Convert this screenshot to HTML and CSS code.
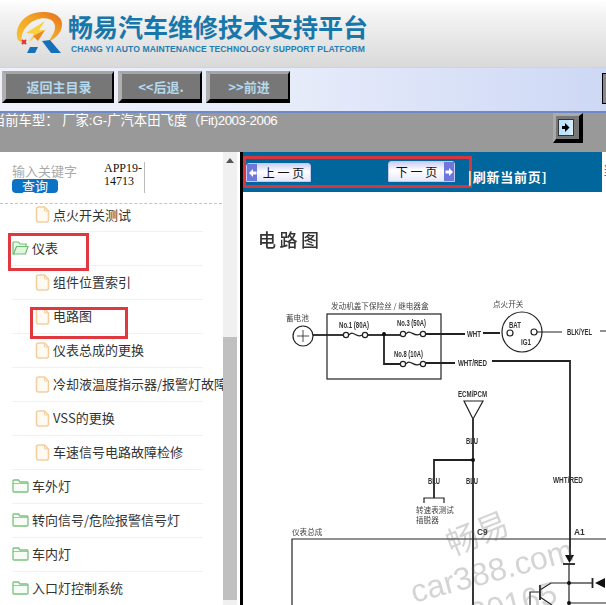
FILE: index.html
```html
<!DOCTYPE html>
<html lang="en">
<head>
<meta charset="UTF-8">
<title>畅易汽车维修技术支持平台</title>
<link rel="stylesheet" href="styles.css">
</head>
<body>

<svg class="defs" width="0" height="0">
  <symbol id="ico-file" viewBox="0 0 15 17">
    <path d="M1.5 3 Q1.5 1 3.5 1 H9.5 L13.5 5 V14 Q13.5 16 11.5 16 H3.5 Q1.5 16 1.5 14 Z" fill="#fffaf2" stroke="#f3cfa0" stroke-width="1.6"/>
    <path d="M9.5 1 V5 H13.5" fill="none" stroke="#f3cfa0" stroke-width="1"/>
  </symbol>
  <symbol id="ico-folder" viewBox="0 0 17 14">
    <path d="M1 2 Q1 1 2 1 H6.5 L8 3 H15 Q16 3 16 4 V12 Q16 13 15 13 H2 Q1 13 1 12 Z" fill="#f7fcf6" stroke="#79c47c" stroke-width="1.3"/>
    <path d="M1 4.5 H16" stroke="#79c47c" stroke-width=".8"/>
  </symbol>
  <symbol id="ico-open" viewBox="0 0 17 14">
    <path d="M1 2 Q1 1 2 1 H6.5 L8 3 H14 V5.5 H5 L2 13 H1 Z" fill="#eef8ec" stroke="#6cbd6f" stroke-width="1.2"/>
    <path d="M4.5 5.5 H16 L13.5 13 H1.5 Z" fill="#e2f4df" stroke="#6cbd6f" stroke-width="1.2"/>
  </symbol>
  <symbol id="ico-left" viewBox="0 0 9 10">
    <path d="M1 5 L5 1 V3.5 H8.5 V6.5 H5 V9 Z" fill="#fff"/>
  </symbol>
  <symbol id="ico-right" viewBox="0 0 9 10">
    <path d="M8 5 L4 1 V3.5 H.5 V6.5 H4 V9 Z" fill="#fff"/>
  </symbol>
</svg>

<header class="brand">
  <svg class="logo" width="62" height="56" viewBox="0 0 62 56">
    <defs>
      <linearGradient id="ring" x1="0" y1="1" x2="1" y2="0">
        <stop offset="0" stop-color="#f7c531"/>
        <stop offset=".6" stop-color="#f0a024"/>
        <stop offset="1" stop-color="#e66b1e"/>
      </linearGradient>
    </defs>
    <path d="M18 40 C13 27 25 11 44 12 C55 12 62 17 62 24 C62 33 55 39 48 42 C53 35 57 29 54 23 C50 16 36 17 28 25 C22 31 21 36 22 43 Z" fill="url(#ring)"/>
    <path d="M26 33 L45 21 L39 30 L45 30 L29 42 L34 34 Z" fill="#f8d040"/>
    <path d="M33 36 L45 30 L38 41 Z" fill="#e98a22"/>
    <path d="M22 40 L26 44 M26 40 L22 44" stroke="#e0322a" stroke-width="2"/>
    <path d="M30 47 H38 L35 53 H27 Z" fill="#1670b8"/>
    <path d="M42 41 L50 40 L61 53 H51 Z" fill="#1670b8"/>
  </svg>
  <div class="brand-text">
    <div class="brand-cn">畅易汽车维修技术支持平台</div>
    <div class="brand-en">CHANG YI AUTO MAINTENANCE TECHNOLOGY SUPPORT PLATFORM</div>
  </div>
</header>

<nav class="toolbar">
  <a class="tb-btn tb-home">返回主目录</a>
  <a class="tb-btn tb-back">&lt;&lt;后退.</a>
  <a class="tb-btn tb-back">&gt;&gt;前进</a>
  <span class="tb-edge"></span>
</nav>

<div class="status">
  <span class="status-text">当前车型： 厂家:G-广汽本田飞度（<span class="status-latin">Fit)2003-2006</span></span>
  <a class="toggle"><span class="toggle-in"><svg width="8" height="11" viewBox="0 0 8 11"><path d="M0 4 H3 L3 1 L7.5 5.5 L3 10 V7 H0 Z" fill="#000"/></svg></span></a>
</div>

<div class="main">
  <aside class="side">
    <div class="search">
      <div class="search-box">
        <div class="search-hint">输入关键字</div>
        <a class="search-btn">查询</a>
      </div>
      <div class="search-code">APP19-<br>14713</div>
    </div>
    <ul class="tree">
      <li class="leaf"><svg class="ico"><use href="#ico-file"/></svg>点火开关测试</li>
      <li class="dir"><svg class="ico-d"><use href="#ico-open"/></svg>仪表</li>
      <li class="leaf"><svg class="ico"><use href="#ico-file"/></svg>组件位置索引</li>
      <li class="leaf"><svg class="ico"><use href="#ico-file"/></svg>电路图</li>
      <li class="leaf"><svg class="ico"><use href="#ico-file"/></svg>仪表总成的更换</li>
      <li class="leaf"><svg class="ico"><use href="#ico-file"/></svg>冷却液温度指示器/报警灯故障</li>
      <li class="leaf"><svg class="ico"><use href="#ico-file"/></svg>VSS的更换</li>
      <li class="leaf"><svg class="ico"><use href="#ico-file"/></svg>车速信号电路故障检修</li>
      <li class="dir"><svg class="ico-d"><use href="#ico-folder"/></svg>车外灯</li>
      <li class="dir"><svg class="ico-d"><use href="#ico-folder"/></svg>转向信号/危险报警信号灯</li>
      <li class="dir"><svg class="ico-d"><use href="#ico-folder"/></svg>车内灯</li>
      <li class="dir"><svg class="ico-d"><use href="#ico-folder"/></svg>入口灯控制系统</li>
    </ul>
    <span class="mark mark-dir"></span>
    <span class="mark mark-leaf"></span>
  </aside>

  <div class="scroll">
    <span class="scroll-up"></span>
    <span class="scroll-thumb"></span>
  </div>

  <section class="doc">
    <div class="doc-head">
      <div class="pagebar">
        <div class="pager">
          <a class="page-btn page-prev"><span class="page-arrow"><svg width="9" height="10"><use href="#ico-left"/></svg></span><span class="page-label">上 一 页</span></a>
          <a class="page-btn page-next"><span class="page-label">下 一 页</span><span class="page-arrow"><svg width="9" height="10"><use href="#ico-right"/></svg></span></a>
        </div>
        <span class="refresh">|刷新当前页]</span>
      </div>
      <span class="doc-side">当</span>
    </div>

    <!-- viewBox uses screen coordinates -->
    <svg class="scan" width="363" height="413" viewBox="243 192 363 413">
      <text class="title" x="258" y="247">电路图</text>

      <g class="wires">
        <circle cx="303" cy="336" r="10"/>
        <path d="M297 336 H309 M303 330 V342" class="thin"/>
        <rect x="327" y="314" width="114" height="65"/>
        <path class="fat" d="M313 335 H343"/>
        <path d="M349 335 C353 329 356 339 362 335"/>
        <circle cx="346" cy="335" r="2.6"/><circle cx="365" cy="335" r="2.6"/>
        <path class="fat" d="M368 335 H400"/>
        <path d="M406 334 C410 328 414 338 420 334"/>
        <circle cx="403" cy="334" r="2.6"/><circle cx="423" cy="334" r="2.6"/>
        <path class="fat" d="M426 334 H465 M483 333 H500"/>
        <path class="fat" d="M384 335 V364 H400"/>
        <path d="M406 364 C410 358 414 368 420 364"/>
        <circle cx="403" cy="364" r="2.6"/><circle cx="423" cy="364" r="2.6"/>
        <path class="fat" d="M426 363 H455 M492 361 H570 V555"/>
        <circle cx="522" cy="332" r="20"/>
        <circle cx="510" cy="333" r="3"/><circle cx="534" cy="332" r="3"/>
        <path d="M537 332 H562 M600 331 H606"/>

        <path d="M464 401 H483 L473 419 Z"/>
        <path class="fat" d="M473 419 V605"/>
        <path class="fat" d="M473 460 H434 V498"/>
        <path d="M424 503 V498 H444 V503"/>
        <path d="M292 605 V539 H606"/>

        <path d="M569 564 V605"/>
        <path class="solid" d="M565 555 H574 L569.5 563 Z"/>
        <path class="fat" d="M563 564 H575"/>
        <path d="M569 583 H592"/>
        <path class="fat" d="M592.5 578 V588"/>
        <path class="solid" d="M605 578 V588 L595 583 Z"/>
        <path class="fat" d="M540 585 V600"/>
        <path d="M540 590 L551 583 H569 M540 597 L552 605 M540 592 H530 V605 M569 603 H606"/>
        <circle class="solid" cx="384" cy="334" r="2"/>
        <circle class="solid" cx="473" cy="460" r="2"/>
        <circle class="solid" cx="569" cy="583" r="2"/>
        <circle class="solid" cx="569" cy="603" r="2"/>
      </g>

      <g class="labels">
        <text class="cn" x="286" y="321">蓄电池</text>
        <text class="cn" x="331" y="309">发动机盖下保险丝 / 继电器盒</text>
        <text class="cn" x="493" y="307">点火开关</text>
        <text x="339" y="328" textLength="30" lengthAdjust="spacingAndGlyphs">No.1 (80A)</text>
        <text x="397" y="326" textLength="29" lengthAdjust="spacingAndGlyphs">No.3 (50A)</text>
        <text x="394" y="357" textLength="29" lengthAdjust="spacingAndGlyphs">No.8 (10A)</text>
        <text x="467" y="337" textLength="14" lengthAdjust="spacingAndGlyphs">WHT</text>
        <text x="458" y="366" textLength="29" lengthAdjust="spacingAndGlyphs">WHT/RED</text>
        <text x="509" y="328" textLength="12" lengthAdjust="spacingAndGlyphs">BAT</text>
        <text x="521" y="345" textLength="10" lengthAdjust="spacingAndGlyphs">IG1</text>
        <text x="567" y="335" textLength="25" lengthAdjust="spacingAndGlyphs">BLK/YEL</text>
        <text x="458" y="397" textLength="29" lengthAdjust="spacingAndGlyphs">ECM/PCM</text>
        <text x="466" y="444" textLength="12" lengthAdjust="spacingAndGlyphs">BLU</text>
        <text x="428" y="484" textLength="12" lengthAdjust="spacingAndGlyphs">BLU</text>
        <text x="466" y="484" textLength="12" lengthAdjust="spacingAndGlyphs">BLU</text>
        <text x="553" y="483" textLength="30" lengthAdjust="spacingAndGlyphs">WHT/RED</text>
        <text class="cn" x="416" y="513">转速表测试</text>
        <text class="cn" x="416" y="523">插脱器</text>
        <text class="cn" x="292" y="535">仪表总成</text>
        <text x="477" y="535">C9</text>
        <text x="574" y="535">A1</text>
      </g>

      <g class="mark-water">
        <text class="w-cn" x="446" y="545" transform="rotate(-22 478 535)">畅易</text>
        <text class="w-en" x="408" y="583" transform="rotate(-15 487 570)">car388.com</text>
        <text class="w-en" x="470" y="618" transform="rotate(-15 500 610)">20165</text>
      </g>
    </svg>
  </section>
</div>

</body>
</html>
```

FILE: styles.css
```css
html, body { margin: 0; padding: 0; }
body { width: 606px; height: 605px; overflow: hidden; background: #fff; font-family: "Liberation Sans", "Noto Sans CJK SC", sans-serif; }
a { display: block; cursor: pointer; }
.defs { position: absolute; }

.brand { height: 67px; display: flex; background: linear-gradient(#ffffff, #f2f2f2 25%, #d9d9d9); overflow: hidden; }
.logo { flex: none; }
.brand-text { margin: 12px 0 0 6px; }
.brand-cn { font: bold 25px/28px "Noto Sans CJK SC", sans-serif; color: #1777ab; white-space: nowrap; }
.brand-en { font: bold 8.6px/10px "Liberation Sans", sans-serif; color: #1f7fb3; margin: 4px 0 0 3px; white-space: nowrap; letter-spacing: .07px; }

.toolbar { height: 46px; box-sizing: border-box; display: flex; gap: 4px; padding: 3px 0 0 2px; position: relative; background: linear-gradient(90deg, #eef1fb, #e6ebfa 50%, #cdd8f5); border-top: 1px solid #ccd3e6; border-bottom: 2px solid #6f8ac8; }
.tb-btn { box-sizing: border-box; height: 32px; background: #777; color: #b4d8ee; font: bold 13px/25px "Noto Sans CJK SC", sans-serif; text-align: center; border-style: solid; border-width: 3px 2px 4px 4px; border-color: #a6a6a6 #000 #000 #b0b0b0; }
.tb-home { width: 112px; }
.tb-back { width: 84px; }
.tb-edge { position: absolute; left: 602px; top: 5px; width: 6px; height: 31px; box-sizing: border-box; border: 1px solid #000; background: #888; }

.status { height: 39px; background: #999; display: flex; justify-content: space-between; overflow: hidden; }
.status-text { color: #fff; font-size: 13.3px; line-height: 16px; margin: 0 0 0 -8px; white-space: nowrap; }
.status-latin { letter-spacing: -.45px; }
.toggle { box-sizing: border-box; width: 30px; height: 30px; margin: 0 23px 0 0; background: #777; border-style: solid; border-width: 3px 4px 4px 3px; border-color: #aaa #000 #000 #aaa; padding: 3px 5px 3px 2px; }
.toggle-in { display: flex; align-items: center; justify-content: center; height: 100%; background: linear-gradient(90deg, #bfe4fb 60%, #dff2fd); border: 1px solid #333; box-sizing: border-box; }

.main { display: flex; height: 453px; overflow: hidden; }

.side { width: 223px; flex: none; position: relative; overflow: hidden; }
.search { height: 52px; box-sizing: border-box; margin-right: 1px; border-bottom: 1px dashed #c4c4c4; display: flex; padding: 10px 0 0 12px; }
.search-box { width: 92px; }
.search-hint { color: #aaa; font: 13px/14px "Noto Sans CJK SC", sans-serif; margin-top: 2px; }
.search-btn { width: 46px; height: 14px; margin-top: 1px; border-radius: 4px; background: #0c72c6; color: #fff; font: 13px/14px "Noto Sans CJK SC", sans-serif; text-align: center; }
.search-code { width: 40px; height: 31px; font: 12px/13px "Liberation Serif", serif; color: #111; border-right: 1px solid #bbb; }

.tree { list-style: none; margin: 0; padding: 0; color: #333; font: 13px/16px "Noto Sans CJK SC", sans-serif; }
.tree li { height: 34px; box-sizing: border-box; margin: 0 20px 0 12px; border-bottom: 1px solid #f1f1f1; display: flex; align-items: center; white-space: nowrap; padding-bottom: 1px; }
.tree li:first-child { height: 28px; padding-bottom: 6px; }
.tree .leaf { padding-left: 23px; }
.ico { width: 15px; height: 17px; margin-right: 3px; flex: none; }
.ico-d { width: 17px; height: 14px; margin-right: 3px; flex: none; }

.mark { position: absolute; border: 3px solid #e0383e; box-sizing: border-box; }
.mark-dir { left: 8px; top: 81px; width: 81px; height: 38px; }
.mark-leaf { left: 30px; top: 155px; width: 98px; height: 32px; }

.scroll { width: 17px; flex: none; display: flex; flex-direction: column; background: #f0f0f0; box-sizing: border-box; padding-right: 3px; background-clip: content-box; }
.scroll-up { height: 185px; flex: none; position: relative; }
.scroll-up::before { content: ""; position: absolute; left: 3px; top: 6px; border: 4px solid transparent; border-top: 0; border-bottom: 5px solid #555; }
.scroll-thumb { height: 263px; background: #c0c0c0; }

.doc { width: 366px; flex: none; box-sizing: border-box; border-left: 3px solid #000; overflow: hidden; }
.doc-head { display: flex; height: 40px; }
.pagebar { width: 359px; flex: none; background: #00669b; display: flex; align-items: flex-end; }
.pager { box-sizing: border-box; width: 229px; height: 32px; margin: 0 0 4px 0; border: 3px solid #d8363e; display: flex; }
.page-btn { display: flex; align-items: center; height: 19px; background: linear-gradient(#ccd0f4, #fff 45%, #e6e8fa); border: 1px solid #c3c8ee; border-radius: 3px 3px 0 0; box-sizing: border-box; font: 12px/16px "Noto Sans CJK SC", sans-serif; color: #111; }
.page-prev { width: 65px; margin-top: 4px; }
.page-next { width: 67px; height: 21px; margin: 2px 0 0 77px; }
.page-label { flex: 1; text-align: center; white-space: nowrap; }
.page-arrow { width: 10px; height: 100%; background: #6f76dc; display: flex; align-items: center; justify-content: center; }
.refresh { color: #fff; font: bold 13px/16px "Noto Sans CJK SC", sans-serif; margin: 0 0 7px -4px; white-space: nowrap; letter-spacing: .8px; }
.doc-side { color: #d33; font: 13px/16px "Noto Sans CJK SC", sans-serif; margin: 10px 0 0 1px; width: 3px; overflow: hidden; white-space: nowrap; }

.scan { display: block; filter: blur(.3px); }
.scan .title { font: 500 18px "Noto Sans CJK SC", sans-serif; fill: #333; letter-spacing: 3.5px; }
.wires { fill: none; stroke: #222; stroke-width: 1.2; }
.wires .thin { stroke-width: .8; }
.wires .fat { stroke-width: 1.8; }
.wires .solid { fill: #111; stroke: none; }
.labels text { font: bold 8.4px "Liberation Sans", sans-serif; fill: #333; }
.labels .cn { font: 7.6px "Noto Sans CJK SC", sans-serif; fill: #444; }
.mark-water text { fill: rgba(90, 90, 90, .26); }
.w-cn { font: 32px "Noto Sans CJK SC", sans-serif; }
.w-en { font: 32px "Liberation Sans", sans-serif; }
```
